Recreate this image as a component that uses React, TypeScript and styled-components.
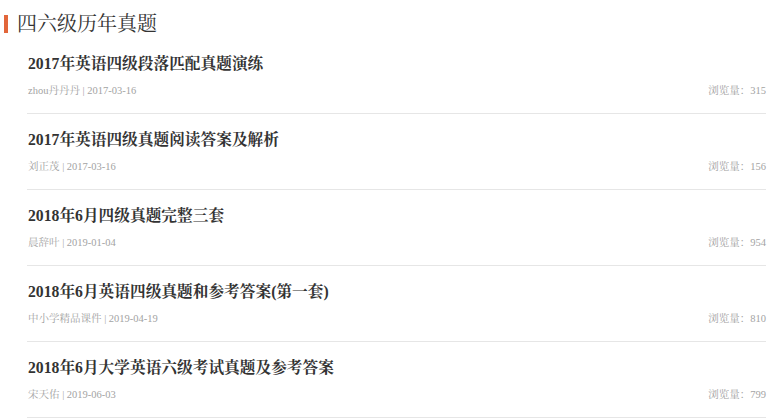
import React from "react";
import styled, { createGlobalStyle } from "styled-components";

const GlobalStyle = createGlobalStyle`
  html, body {
    margin: 0;
    padding: 0;
    background: #ffffff;
  }
  body {
    font-family: "Liberation Serif", "Noto Serif CJK SC", "Noto Sans CJK SC", serif;
    -webkit-font-smoothing: antialiased;
  }
`;

const Page = styled.div`
  width: 784px;
  height: 418px;
  overflow: hidden;
  background: #fff;
`;

const Header = styled.div`
  display: flex;
  align-items: center;
  padding: 14px 0 0 4px;
  height: 20px;
`;

const Bar = styled.span`
  display: block;
  width: 4px;
  height: 18px;
  background: #e2663a;
  margin-right: 9px;
`;

const HeaderTitle = styled.h2`
  margin: 0;
  font-size: 20px;
  line-height: 20px;
  font-weight: normal;
  color: #333;
`;

const List = styled.ul`
  list-style: none;
  margin: 4px 0 0 27px;
  padding: 0;
  width: 739px;
`;

const Item = styled.li`
  padding: 16px 0 14px 1px;
  border-bottom: 1px solid #e6e6e6;
`;

const ItemTitle = styled.div`
  font-size: 15.7px;
  line-height: 20px;
  font-weight: bold;
  color: #333;
`;

const Meta = styled.div`
  display: flex;
  justify-content: space-between;
  align-items: center;
  margin-top: 9px;
  height: 16px;
  font-size: 10.5px;
  line-height: 16px;
  color: #a3a3a3;
`;

const Views = styled.span`
  color: #a3a3a3;
`;

const items = [
  { title: "2017年英语四级段落匹配真题演练", author: "zhou丹丹丹", date: "2017-03-16", views: 315 },
  { title: "2017年英语四级真题阅读答案及解析", author: "刘正茂", date: "2017-03-16", views: 156 },
  { title: "2018年6月四级真题完整三套", author: "晨辞叶", date: "2019-01-04", views: 954 },
  { title: "2018年6月英语四级真题和参考答案(第一套)", author: "中小学精品课件", date: "2019-04-19", views: 810 },
  { title: "2018年6月大学英语六级考试真题及参考答案", author: "宋天佑", date: "2019-06-03", views: 799 },
];

export default function App() {
  return (
    <Page>
      <GlobalStyle />
      <Header>
        <Bar />
        <HeaderTitle>四六级历年真题</HeaderTitle>
      </Header>
      <List>
        {items.map((it) => (
          <Item key={it.title}>
            <ItemTitle>{it.title}</ItemTitle>
            <Meta>
              <span>
                {it.author} | {it.date}
              </span>
              <Views>浏览量：{it.views}</Views>
            </Meta>
          </Item>
        ))}
      </List>
    </Page>
  );
}
